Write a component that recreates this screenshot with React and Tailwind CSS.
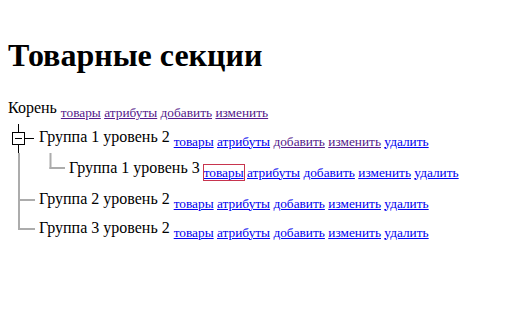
import React from "react";

const GRAY = "#acacac";

function Links({ visited = [], focused = -1, del = true }) {
  const items = ["товары", "атрибуты", "добавить", "изменить"];
  if (del) items.push("удалить");
  return (
    <span className="align-sub text-[13.33px]">
      {items.map((t, i) => (
        <React.Fragment key={t}>
          {i > 0 ? " " : ""}
          <a
            href="#"
            className={
              "underline " +
              (visited.includes(i) ? "text-[#551a8b]" : "text-[#0000ee]") +
              (i === focused ? " outline outline-1 outline-[#c8354e]" : "")
            }
          >
            {t}
          </a>
        </React.Fragment>
      ))}
    </span>
  );
}

function Row({ h, svg, children }) {
  return (
    <div className="flex items-center" style={{ height: h }}>
      {svg}
      <div className="whitespace-nowrap leading-normal">{children}</div>
    </div>
  );
}

export default function App() {
  return (
    <div
      className="min-h-[313px] bg-white px-2 pt-2 text-[16px] text-black"
      style={{ fontFamily: '"Liberation Serif", "Times New Roman", serif' }}
    >
      <h1 className="mt-[29px] mb-[22px] text-[32px] font-bold leading-[37px]">
        Товарные секции
      </h1>
      <div className="whitespace-nowrap leading-normal">
        Корень <Links visited={[0, 1, 2, 3]} del={false} />
      </div>
      <div>
        <Row
          h={30}
          svg={
            <svg width="31" height="30" className="block shrink-0">
              <line x1="10.5" y1="1" x2="10.5" y2="9" stroke="#000" />
              <rect x="4.5" y="9.5" width="12" height="12" fill="#fff" stroke="#000" />
              <line x1="7" y1="15.5" x2="14" y2="15.5" stroke="#000" />
              <line x1="16.5" y1="15.5" x2="26" y2="15.5" stroke="#000" />
              <line x1="10.5" y1="22" x2="10.5" y2="30" stroke="#000" />
            </svg>
          }
        >
          Группа 1 уровень 2 <Links visited={[2, 3]} />
        </Row>
        <Row
          h={32}
          svg={
            <svg width="61" height="32" className="block shrink-0">
              <rect x="10" y="0" width="2" height="32" fill={GRAY} />
              <rect x="41.5" y="0" width="2" height="16" fill={GRAY} />
              <rect x="41.5" y="14" width="15.5" height="2" fill={GRAY} />
            </svg>
          }
        >
          Группа 1 уровень 3 <Links focused={0} />
        </Row>
        <Row
          h={30}
          svg={
            <svg width="31" height="30" className="block shrink-0">
              <rect x="10" y="0" width="2" height="30" fill={GRAY} />
              <rect x="12" y="14" width="15" height="2" fill={GRAY} />
            </svg>
          }
        >
          Группа 2 уровень 2 <Links />
        </Row>
        <Row
          h={28}
          svg={
            <svg width="31" height="28" className="block shrink-0">
              <rect x="10" y="0" width="2" height="15" fill={GRAY} />
              <rect x="10" y="13" width="17" height="2" fill={GRAY} />
            </svg>
          }
        >
          Группа 3 уровень 2 <Links />
        </Row>
      </div>
    </div>
  );
}
